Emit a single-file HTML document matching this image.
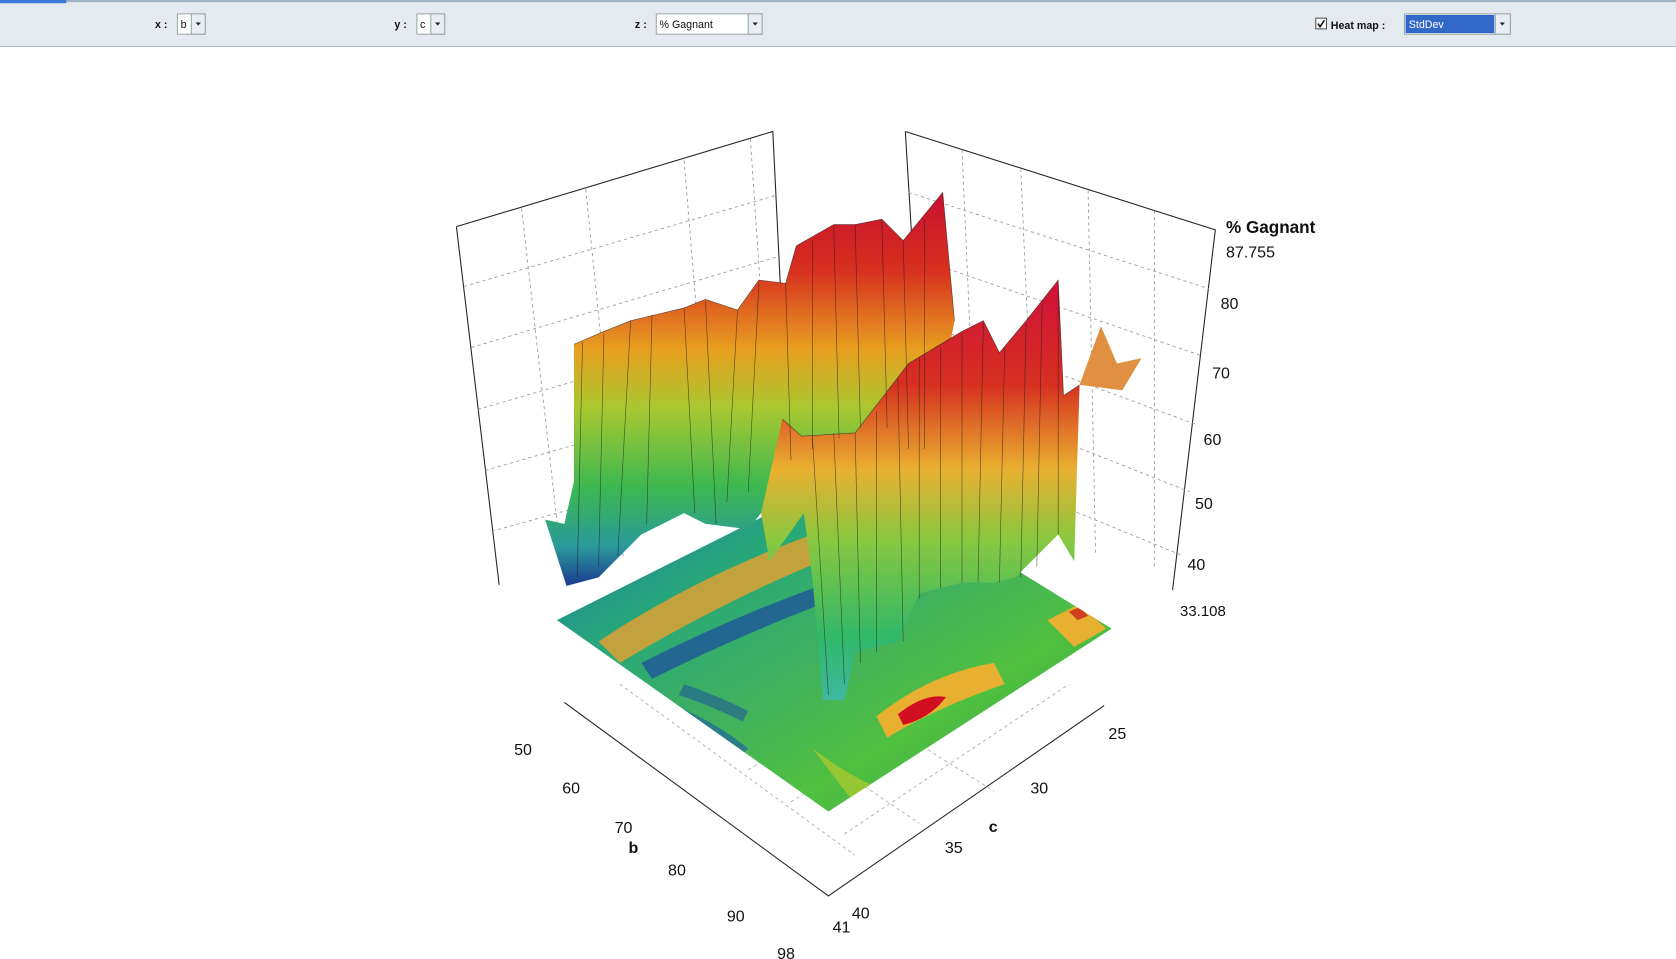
<!DOCTYPE html>
<html><head><meta charset="utf-8"><style>
html,body{margin:0;padding:0;background:#fff;width:1676px;height:959px;overflow:hidden}
svg{display:block}
text{font-family:"Liberation Sans",sans-serif}
</style></head><body>
<svg width="1676" height="959" viewBox="0 0 1568 897" preserveAspectRatio="none">
<defs>
<linearGradient id="sg" x1="0" y1="0" x2="0" y2="1">
<stop offset="0" stop-color="#c8102e"/><stop offset="0.2" stop-color="#d7301f"/><stop offset="0.4" stop-color="#e8a020"/><stop offset="0.55" stop-color="#a8c830"/><stop offset="0.75" stop-color="#3cb850"/><stop offset="0.9" stop-color="#2a9a9a"/><stop offset="1" stop-color="#1a3a90"/>
</linearGradient>
<linearGradient id="sg2" x1="0" y1="0" x2="0" y2="1">
<stop offset="0" stop-color="#d0103a"/><stop offset="0.25" stop-color="#d63020"/><stop offset="0.45" stop-color="#e9b030"/><stop offset="0.62" stop-color="#88c840"/><stop offset="0.85" stop-color="#30b868"/><stop offset="1" stop-color="#40b8a0"/>
</linearGradient>
<linearGradient id="hm" x1="0" y1="0" x2="1" y2="1">
<stop offset="0" stop-color="#1a70b0"/><stop offset="0.3" stop-color="#28a878"/><stop offset="0.5" stop-color="#40b060"/><stop offset="0.7" stop-color="#50c040"/><stop offset="1" stop-color="#30a050"/>
</linearGradient>
<clipPath id="fl"><polygon points="521,580 800,440 1040,588 775,759"/></clipPath>
</defs>
<!-- toolbar -->
<rect x="0" y="0" width="1568" height="44" fill="#e3ebf1"/>
<rect x="0" y="0" width="1568" height="2" fill="#9fb2c2"/>
<rect x="0" y="0" width="62" height="3" fill="#3d7ad8"/>
<rect x="0" y="43" width="1568" height="1" fill="#b0bcc6"/>
<g font-size="10" font-weight="bold" fill="#111">
<text x="145" y="26">x :</text>
<rect x="166" y="13" width="26" height="19" fill="#fff" stroke="#9aa" /><rect x="179" y="13" width="13" height="19" fill="#e8eef2" stroke="#9aa"/>
<text x="169" y="26" font-weight="normal">b</text><path d="M183 21h5l-2.5 3z" fill="#222"/>
<text x="369" y="26">y :</text>
<rect x="390" y="13" width="26" height="19" fill="#fff" stroke="#9aa"/><rect x="403" y="13" width="13" height="19" fill="#e8eef2" stroke="#9aa"/>
<text x="393" y="26" font-weight="normal">c</text><path d="M407 21h5l-2.5 3z" fill="#222"/>
<text x="594" y="26">z :</text>
<rect x="614" y="13" width="99" height="19" fill="#fff" stroke="#9aa"/><rect x="700" y="13" width="13" height="19" fill="#e8eef2" stroke="#9aa"/>
<text x="617" y="26" font-weight="normal">% Gagnant</text><path d="M704 21h5l-2.5 3z" fill="#222"/>
<rect x="1231" y="17" width="10" height="10" fill="#fff" stroke="#555"/><path d="M1233 22l2 3 4-6" stroke="#111" fill="none" stroke-width="1.5"/>
<text x="1245" y="27">Heat map :</text>
<rect x="1314" y="13" width="99" height="19" fill="#fff" stroke="#9aa"/><rect x="1315" y="14" width="83" height="17" fill="#3167c6"/><rect x="1399" y="13" width="14" height="19" fill="#e8eef2" stroke="#9aa"/>
<text x="1318" y="26" fill="#fff" font-weight="normal">StdDev</text><path d="M1403 21h5l-2.5 3z" fill="#222"/>
</g>
<!-- walls -->
<g fill="none" stroke="#222" stroke-width="1">
<path d="M427 212L723 123L740 470M427 212L467 547"/>
<path d="M847 123L1137 215L1097 552M847 123L868 470"/>
</g>
<g fill="none" stroke="#999" stroke-dasharray="3,3" stroke-width="0.8">
<path d="M434 268L725 183M441 325L728 240M447 383L731 300M454 440L734 360M460 497L737 420"/>
<path d="M488 195L527 540M548 177L583 520M640 150L668 490M702 130L725 470"/>
<path d="M850 180L1131 270M853 240L1125 333M856 300L1119 397M860 360L1113 460M863 420L1107 520"/>
<path d="M900 140L915 480M955 158L970 500M1018 178L1025 520M1080 197L1080 530"/>
</g>
<!-- floor axes -->
<path d="M528 657L775 838L1033 660" fill="none" stroke="#222"/>
<g fill="none" stroke="#aaa" stroke-dasharray="3,3" stroke-width="0.8">
<path d="M580 640L800 800M630 615L860 770M690 590L930 740M790 780L1000 640M740 750L960 610M700 720L920 590"/>
</g>
<!-- heat map floor -->
<polygon points="521,580 800,440 1040,588 775,759" fill="url(#hm)"/>
<g clip-path="url(#fl)">
<path d="M560 600Q650 540 760 500L780 520Q680 560 580 620Z" fill="#e8a030" opacity="0.8"/>
<path d="M600 620Q700 570 790 540L795 555Q700 590 610 635Z" fill="#1a4aa0" opacity="0.7"/>
<path d="M585 645Q650 660 700 700L690 710Q640 670 580 655Z" fill="#1a5aa8" opacity="0.6"/>
<path d="M640 640Q670 650 700 665L695 675Q665 660 635 650Z" fill="#1a4aa0" opacity="0.5"/>
<path d="M820 670Q870 630 930 620L940 640Q880 660 830 690Z" fill="#e8b030"/>
<path d="M840 668Q865 648 885 652Q870 672 845 678Z" fill="#d01020"/>
<path d="M980 580L1010 565L1035 588L1005 605Z" fill="#e8b030"/>
<path d="M1000 572l10 -4 8 8-10 4z" fill="#d04020"/>
<path d="M760 700Q800 730 830 740L800 752Z" fill="#a8c830" opacity="0.8"/>
</g>
<!-- back surface -->
<polygon points="537,322 565,310 590,300 640,288 660,280 690,290 710,262 735,265 745,230 780,210 800,210 825,205 845,225 882,180 893,300 870,420 850,440 800,420 760,440 720,470 700,495 660,490 640,480 600,500 560,540 530,548 510,486 528,490 537,450" fill="url(#sg)"/>
<polygon points="1010,360 1030,305 1045,340 1068,335 1050,365" fill="#e09040"/>
<!-- front surface -->
<polygon points="732,392 750,408 800,405 850,340 900,310 920,300 935,330 960,300 990,262 995,370 1010,360 1005,525 990,500 950,540 930,545 900,545 860,555 840,600 800,610 790,655 770,655 760,540 752,480 720,525 712,480" fill="url(#sg2)"/>
<g stroke="#222" stroke-width="0.6" fill="none" opacity="0.7">
<path d="M545 320L540 540M565 312L560 530M590 300L578 520M610 294L605 490M640 288L650 480M660 282L670 490M690 290L680 470M710 265L700 460M735 265L740 430M760 225L760 420M780 212L785 410M800 210L805 400M825 205L830 400M845 225L850 420M865 205L865 420"/>
<path d="M760 408L775 650M780 405L790 640M800 405L805 620M820 385L820 610M840 355L845 600M860 335L860 560M880 325L880 550M900 312L900 545M920 302L915 545M940 325L935 545M960 302L955 540M975 285L970 530M990 265L990 500"/>
<path d="M537 322L565 310L590 300L640 288L660 280L690 290L710 262L735 265L745 230L780 210L800 210L825 205L845 225L882 180L893 300"/>
<path d="M732 392L750 408L800 405L850 340L900 310L920 300L935 330L960 300L990 262L995 370L1010 360"/>
</g>
<!-- labels -->
<g fill="#111" font-size="15">
<text x="1147" y="218" font-weight="bold" font-size="16">% Gagnant</text>
<text x="1147" y="241">87.755</text>
<text x="1142" y="289">80</text><text x="1134" y="354">70</text><text x="1126" y="416">60</text>
<text x="1118" y="476">50</text><text x="1111" y="533">40</text><text x="1104" y="576" font-size="14">33.108</text>
<text x="481" y="706">50</text><text x="526" y="742">60</text><text x="575" y="779">70</text>
<text x="588" y="798" font-weight="bold">b</text>
<text x="625" y="819">80</text><text x="680" y="862">90</text><text x="727" y="897">98</text>
<text x="1037" y="691">25</text><text x="964" y="742">30</text><text x="884" y="798">35</text>
<text x="925" y="778" font-weight="bold">c</text>
<text x="797" y="859">40</text><text x="779" y="872">41</text>
</g>
</svg>
</body></html>
